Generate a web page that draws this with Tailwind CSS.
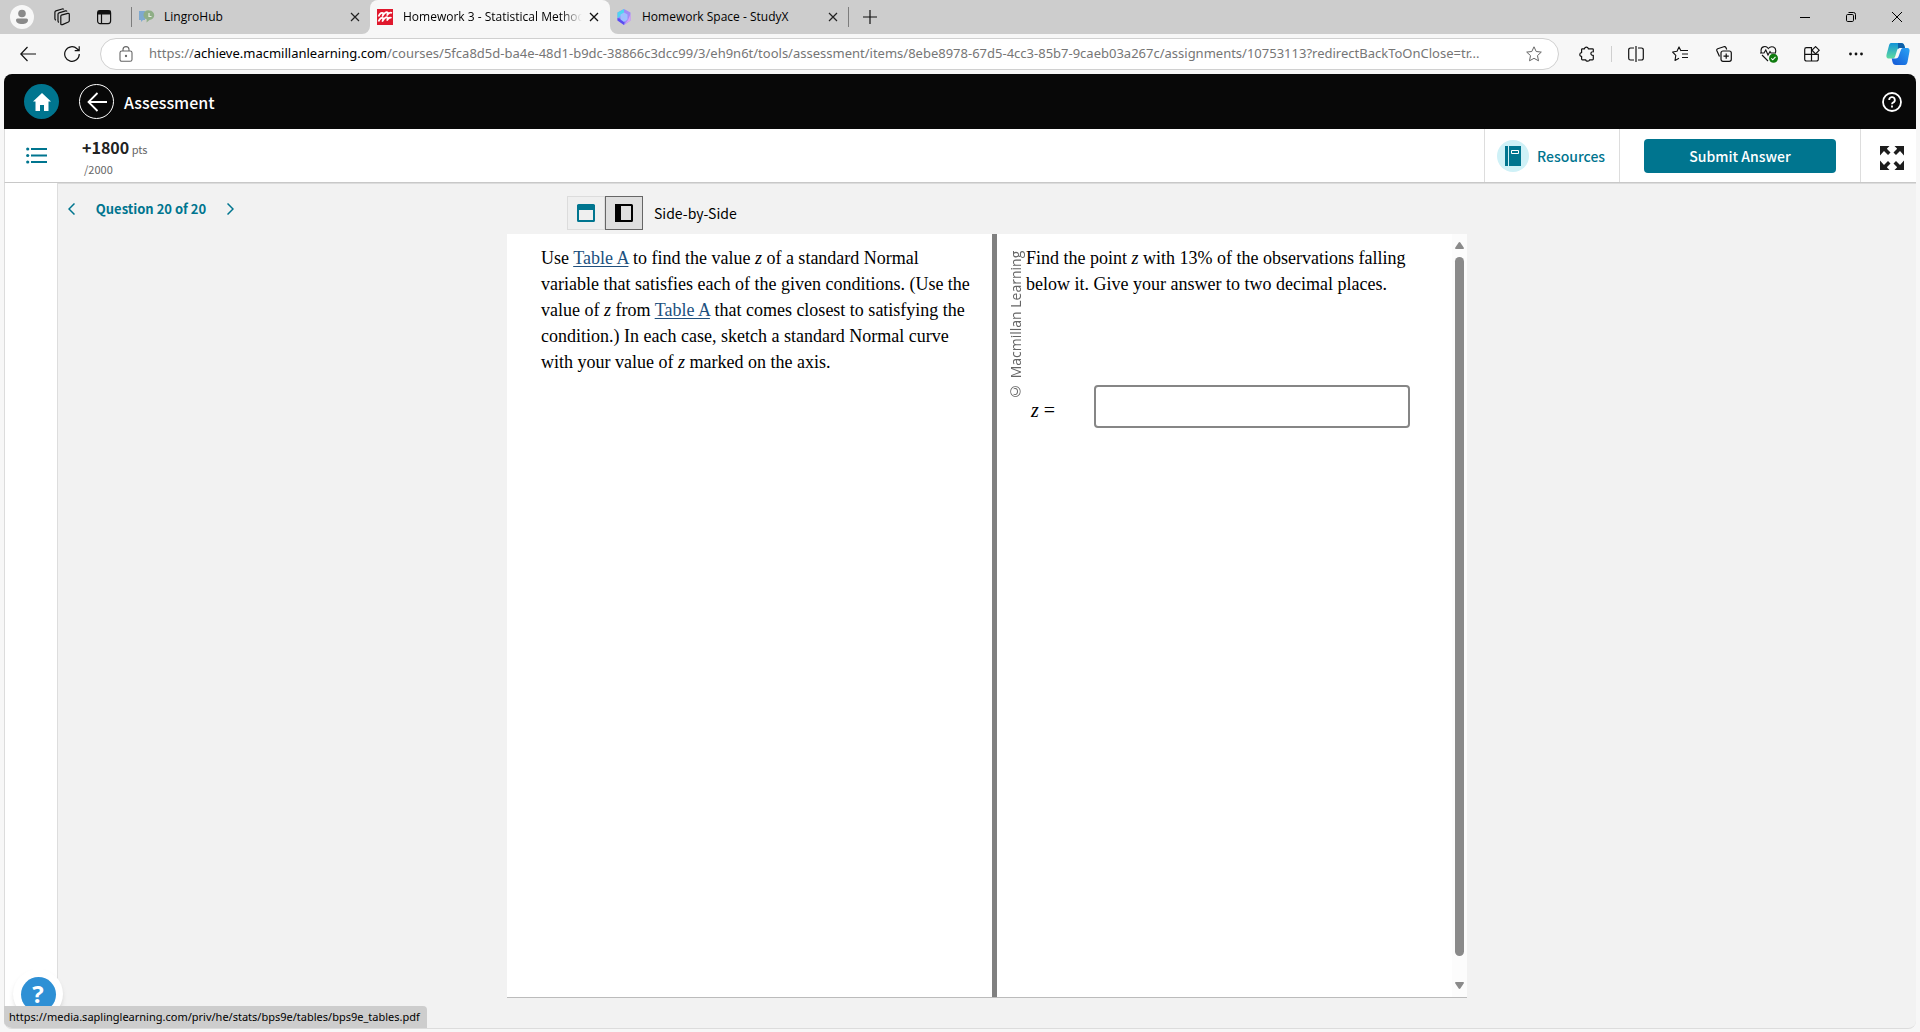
<!DOCTYPE html>
<html lang="en">
<head>
<meta charset="utf-8">
<title>Homework 3 - Statistical Methods</title>
<script src="https://cdn.jsdelivr.net/npm/@tailwindcss/browser@4"></script>
</head>
<body class="flex h-screen flex-col overflow-hidden bg-[#f7f7f7] font-['Open_Sans',sans-serif] text-black">

<!-- Tab strip -->
<div class="flex h-[34px] shrink-0 items-stretch bg-[#cdcdcd] text-xs">
  <div class="flex items-center pl-[10px]">
    <button aria-label="Profile" class="flex size-6 items-center justify-center rounded-full bg-[#f7f7f7]">
      <svg class="size-6" viewBox="0 0 24 24" fill="#8a8a8a"><circle cx="12" cy="8.500" r="3.800"/><path d="M7.500 13.500h9a1.500 1.500 0 0 1 1.500 1.500c0 2.600-2.500 4-6 4s-6-1.400-6-4a1.500 1.500 0 0 1 1.500-1.500z"/></svg>
    </button>
    <button aria-label="Workspaces" class="ml-[19px] size-[18px]">
      <svg class="size-[18px]" viewBox="0 0 18 18" fill="none" stroke="#111" stroke-width="1.200" stroke-linejoin="round"><path d="M8.300 7.200l6.500-1.800c.9-.2 1.500.2 1.500 1v6.200c0 .6-.3 1.100-.9 1.400l-5.900 2.600c-.9.4-1.700 0-1.700-.9V8.400c0-.6 0-1 .5-1.200z"/><path d="M6 14.300c-.8-.2-1-.7-1-1.400V6.200c0-.7.3-1.200 1-1.400l6.500-1.900c.7-.2 1.200 0 1.500.6"/><path d="M3 12.200c-.8-.2-1.100-.7-1.100-1.400V4.200c0-.7.3-1.200 1-1.400L9.200 1c.7-.2 1.200 0 1.500.6"/></svg>
    </button>
    <button aria-label="Tab actions" class="ml-[25px] size-4">
      <svg class="size-4" viewBox="0 0 16 16" fill="none" stroke="#111" stroke-width="1.200"><rect x="1.600" y="1.600" width="13" height="13" rx="2.500"/><path d="M1.600 3.500h13" stroke-width="4"/><path d="M5.500 5v9.500"/></svg>
    </button>
    <span class="ml-[19px] h-5 w-px bg-[#7d7d7d]"></span>
  </div>
  <div class="flex w-[238px] items-center pl-[7px]">
    <svg class="h-4 w-4" viewBox="0 0 16 16"><path d="M0 2h6v9H4l-2 2v-2H0z" fill="#7fa9cf"/><path d="M10.500 1.500a4.500 4.500 0 0 1 0 9.500l-3 2.500.3-3A4.500 4.500 0 0 1 10.500 1.500z" fill="#8fae86"/><path d="M10 4v3.500h2.500" stroke="#e6ece3" fill="none" stroke-width="1.200"/></svg>
    <span class="ml-[9px] flex-1">LingroHub</span>
    <button aria-label="Close tab" class="mr-[9px] size-3"><svg class="size-3" viewBox="0 0 12 12" stroke="#222" stroke-width="1.200"><path d="M2 2l8 8M10 2l-8 8"/></svg></button>
  </div>
  <div class="relative flex w-60 items-center rounded-t-lg bg-[#f7f7f7] pl-[7px]">
    <svg class="absolute bottom-0 -left-2 size-2" viewBox="0 0 8 8" fill="#f7f7f7"><path d="M8 0v8H0a8 8 0 0 0 8-8z"/></svg>
    <svg class="absolute -right-2 bottom-0 size-2" viewBox="0 0 8 8" fill="#f7f7f7"><path d="M0 0v8h8a8 8 0 0 1-8-8z"/></svg>
    <svg class="size-4" viewBox="0 0 16 16"><path d="M0 0h16v16H0z" fill="#e0182d"/><path d="M1.500 7.500C3 4 5 3 6.500 4.500L5.500 7C8 3 9.500 2.500 11 4l-.8 2C11.500 4 13 3 15 4M1.500 12.500C3 9 5 8 6.500 9.500L5.500 12C8 8 9.500 7.500 11 9l-.8 2c1.300-2 2.800-3 4.300-2" stroke="#fff" stroke-width="1.800" fill="none" stroke-linejoin="round"/></svg>
    <span class="ml-[10px] w-[179px] overflow-hidden mask-r-from-88% whitespace-nowrap">Homework 3 - Statistical Methods</span>
    <button aria-label="Close tab" class="ml-[6px] size-3"><svg class="size-3" viewBox="0 0 12 12" stroke="#111" stroke-width="1.300"><path d="M2 2l8 8M10 2l-8 8"/></svg></button>
  </div>
  <div class="flex w-[238px] items-center pl-[7px]">
    <svg class="h-4 w-[14px]" viewBox="0 0 14 16"><path d="M7 0l6.500 3.500v8L7 16 .5 11.500v-8z" fill="#a08cf5"/><path d="M7 0L.5 3.500v6L7 4z" fill="#4fd6ef"/><path d="M.5 9v2.500L7 16l1-5z" fill="#5a4df0"/><path d="M7 3.500l3.500 2v5L7 13l-3.500-2.500v-5z" fill="#9fc0ff"/><path d="M13.500 5v6.500L8 15l3-4z" fill="#d8a2f5"/></svg>
    <span class="ml-[11px] flex-1">Homework Space - StudyX</span>
    <button aria-label="Close tab" class="mr-[9px] size-3"><svg class="size-3" viewBox="0 0 12 12" stroke="#222" stroke-width="1.200"><path d="M2 2l8 8M10 2l-8 8"/></svg></button>
  </div>
  <div class="flex flex-1 items-center">
    <span class="h-5 w-px bg-[#7d7d7d]"></span>
    <button aria-label="New tab" class="ml-[14px] size-[14px]"><svg class="size-[14px]" viewBox="0 0 14 14" stroke="#111" stroke-width="1.200"><path d="M7 0v14M0 7h14"/></svg></button>
  </div>
  <div class="flex">
    <button aria-label="Minimize" class="flex w-[46px] items-center justify-center"><svg class="size-[10px]" viewBox="0 0 10 10" stroke="#000"><path d="M0 5.500h10"/></svg></button>
    <button aria-label="Restore" class="flex w-[46px] items-center justify-center"><svg class="size-[10px]" viewBox="0 0 10 10" stroke="#000" fill="none"><rect x=".5" y="2.500" width="7" height="7" rx="1.200"/><path d="M2.500.5h5a2 2 0 0 1 2 2v5"/></svg></button>
    <button aria-label="Close window" class="flex w-[46px] items-center justify-center"><svg class="size-[10px]" viewBox="0 0 10 10" stroke="#000"><path d="M0 0l10 10M10 0L0 10"/></svg></button>
  </div>
</div>

<!-- Address bar -->
<div class="flex h-10 shrink-0 items-center pr-[10px] pl-5">
  <button aria-label="Back" class="size-4"><svg class="size-4" viewBox="0 0 16 16" fill="none" stroke="#111" stroke-width="1.200"><path d="M16 8H.8M7.500 1L.8 8l6.700 7"/></svg></button>
  <button aria-label="Refresh" class="ml-7 size-4"><svg class="size-4" viewBox="0 0 16 16" fill="none" stroke="#111" stroke-width="1.200"><path d="M15.300 8A7.300 7.300 0 1 1 13 2.700l2 1.800M15.200.2v4.500h-4.500"/></svg></button>
  <div class="ml-5 flex h-8 min-w-0 flex-1 items-center rounded-full border border-[#d0d0d0] bg-white pr-4 pl-[18px]">
    <svg class="h-4 w-[14px] shrink-0" viewBox="0 0 14 16" fill="none" stroke="#666" stroke-width="1.100"><rect x="1" y="5" width="12" height="10.300" rx="1.800"/><path d="M4 5V3.600a3 3 0 0 1 6 0V5"/><circle cx="7" cy="10" r=".6" fill="#666"/></svg>
    <span class="ml-4 min-w-0 flex-1 overflow-hidden font-['Noto_Sans',sans-serif] text-[13px] text-ellipsis whitespace-nowrap text-[#767676]">https://<span class="text-black">achieve.macmillanlearning.com</span>/courses/5fca8d5d-ba4e-48d1-b9dc-38866c3dcc99/3/eh9n6t/tools/assessment/items/8ebe8978-67d5-4cc3-85b7-9caeb03a267c/assignments/10753113?redirectBackToOnClose=tr...</span>
    <button aria-label="Favorite" class="ml-4 size-4 shrink-0"><svg class="size-4" viewBox="0 0 16 16" fill="none" stroke="#666" stroke-linejoin="round"><path d="M8 .8l2.200 4.700 5.100.6-3.800 3.500 1 5.200L8 12.300l-4.500 2.500 1-5.200L.7 6.100l5.100-.6z"/></svg></button>
  </div>
  <div class="ml-5 flex shrink-0 items-center">
    <button aria-label="Extensions" class="size-4"><svg class="size-4" viewBox="0 0 16 16" fill="none" stroke="#111" stroke-width="1.200" stroke-linejoin="round"><path d="M5.500 2.500a2 2 0 0 1 3.800 0v.3h4.200c.5 0 .8.300.8.800v2.200c-3.200-.6-3.200 4 0 3.600v3.700c0 .5-.3.800-.8.800h-3c.2 1.500-3.600 2-3.700 0H3.400c-.5 0-.8-.3-.8-.8V10.300c-2.400.2-2.400-3.600 0-3.700V3.600c0-.5.300-.8.800-.8h2.100z"/></svg></button>
    <span class="mx-4 h-4 w-px bg-[#cfcfcf]"></span>
    <button aria-label="Split screen" class="size-4"><svg class="size-4" viewBox="0 0 16 16" fill="none" stroke="#111" stroke-width="1.200"><path d="M6 2H2.500A1.800 1.800 0 0 0 .7 3.800v8.400A1.800 1.800 0 0 0 2.500 14H6M10 2h3.500a1.800 1.800 0 0 1 1.800 1.800v8.400a1.800 1.800 0 0 1-1.800 1.800H10M8 0v16"/></svg></button>
    <button aria-label="Favorites" class="ml-7 size-4"><svg class="size-4" viewBox="0 0 16 16" fill="none" stroke="#111" stroke-width="1.100" stroke-linejoin="round"><path d="M9 5L7 .9 5 5.300.6 6l3.200 3.300-.8 5.200 4-2.200M9 4.500h7M10 8h6M10 11.500h6"/></svg></button>
    <button aria-label="Collections" class="ml-7 size-4"><svg class="size-4" viewBox="0 0 16 16" fill="none" stroke="#111" stroke-width="1.200"><rect x="5" y="5" width="10.300" height="10.300" rx="2"/><path d="M10.200 7.500v5.300M7.500 10.200h5.300M3.500 10.500L.9 4.800c-.4-1 0-1.800.8-2.100L7.800.7c1-.3 1.800 0 2.200 1L10.700 3.500"/></svg></button>
    <button aria-label="Browser essentials" class="ml-7 h-[18px] w-[18px]"><svg class="size-[18px]" viewBox="0 0 18 18" fill="none" stroke="#111" stroke-width="1.100"><path d="M1.300 7.500C-.2 1 6 .3 8.300 3.500 11 .3 17 1.500 15.500 7.500M0 8h4l1.800-3L8 10l2-3.500 1 1.500h5M2 10l6 6"/><circle cx="13.500" cy="13.200" r="4.500" fill="#107c10" stroke="none"/><path d="M11.300 13.300l1.500 1.500 2.700-3" stroke="#fff"/></svg></button>
    <button aria-label="Apps" class="ml-[26px] size-4"><svg class="size-4" viewBox="0 0 16 16" fill="none" stroke="#111" stroke-width="1.200"><path d="M8 1.600H2.500A1.800 1.800 0 0 0 .7 3.400v9.800A1.800 1.800 0 0 0 2.500 15h10a1.800 1.800 0 0 0 1.800-1.800V8.300H.7M7.500 1.600V15"/><path d="M11.600.6l3.600 3.600-3.600 3.600L8 4.200z" fill="#f7f7f7"/></svg></button>
    <button aria-label="Settings and more" class="ml-7 size-4"><svg class="size-4" viewBox="0 0 16 16" fill="#111"><circle cx="2.500" cy="8" r="1.400"/><circle cx="8" cy="8" r="1.400"/><circle cx="13.500" cy="8" r="1.400"/></svg></button>
    <button aria-label="Copilot" class="ml-[22px] size-6"><svg class="size-6" viewBox="0 0 24 24"><defs><linearGradient id="a" x1="0" y1="0" x2="0" y2="1"><stop stop-color="#1293d8"/><stop offset="1" stop-color="#5fdb9f"/></linearGradient><linearGradient id="b" x1="0" y1="1" x2="1" y2="0"><stop stop-color="#1558d6"/><stop offset="1" stop-color="#28a3f5"/></linearGradient></defs><path d="M5 1h10c2 0 3 1 3.500 3l.5 2h-5c-2 0-2.500 1-3 2.500L9.300 14c-.6 2-1.500 2.500-3.300 2.500H3c-2.500 0-3-2-2.300-4.500L3 3.500C3.400 2 4 1 5 1z" fill="url(#a)"/><path d="M12 1h3c2 0 3 1 3.500 3l.5 2h-5c-1 0-1.500.300-2 1z" fill="#0d5fa8"/><path d="M19 23H10c-2 0-3-1-3.500-3l-.8-3.500h4c2 0 2.500-1 3-2.500L14.700 8.500C15.300 6.500 16 6 18 6h3c2.500 0 3 2 2.300 4.500L21.500 20c-.4 2-1.500 3-2.500 3z" fill="url(#b)"/></svg></button>
  </div>
</div>

<!-- Page -->
<div class="relative mx-1 mb-[3px] flex min-h-0 flex-1 flex-col overflow-hidden rounded-lg border-b border-[#dcdcdc] bg-[#f2f2f2] font-['Noto_Sans_CJK_SC',sans-serif]">
  <header class="flex h-[55px] shrink-0 items-center bg-[#080808] pr-[14px] pl-5 text-white">
    <a href="#" aria-label="Home" class="flex size-[35px] items-center justify-center rounded-full bg-[#00758f]"><svg class="size-[18px]" viewBox="0 0 18 18" fill="#fff"><path d="M9 0l9 8.500h-2.500V18H11v-6H7v6H2.500V8.500H0z"/></svg></a>
    <a href="#" aria-label="Back" class="ml-5 flex size-[35px] items-center justify-center rounded-full border border-white"><svg class="size-5" viewBox="0 0 20 20" fill="none" stroke="#fff" stroke-width="1.800"><path d="M20 10H1.500M10.500 1l-9 9 9 9"/></svg></a>
    <h1 class="ml-[10px] flex-1 text-base leading-6 font-medium">Assessment</h1>
    <button aria-label="Help" class="size-5"><svg class="size-5" viewBox="0 0 20 20" fill="none" stroke="#fff" stroke-width="1.800"><circle cx="10" cy="10" r="9"/><path d="M7.200 8a2.800 2.800 0 1 1 3.800 2.600c-.7.300-1 .7-1 1.700"/><path d="M10 13.500v2"/></svg></button>
  </header>

  <div class="flex h-[54px] shrink-0 items-stretch border-b border-l border-b-[#c8c8c8] border-l-[#dcdcdc] bg-white">
    <button aria-label="Menu" class="flex w-[63px] items-center pl-[21px]"><svg class="h-[17px] w-[21px]" viewBox="0 0 21 17" stroke="#00758f" fill="#00758f" stroke-width="2"><path d="M5 2h16M5 8.500h16M5 15h16"/><g stroke="none"><circle cx="1.700" cy="2" r="1.600"/><circle cx="1.700" cy="8.500" r="1.600"/><circle cx="1.700" cy="15" r="1.600"/></g></svg></button>
    <div class="flex flex-1 flex-col pt-2 pl-[14px] text-[11px] leading-[20px] text-[#666]">
      <div><b class="text-base leading-[20px] font-bold text-[#222]">+1800</b> pts</div>
      <div class="pl-[2px]">/2000</div>
    </div>
    <a href="#" class="flex w-[136px] items-center gap-2 border-x border-[#ddd] pl-3 text-sm font-medium text-[#00758f]">
      <span class="flex size-8 items-center justify-center rounded-full bg-[#cff1f7]"><svg class="h-5 w-4" viewBox="0 0 16 20"><path d="M0 0h3v20H0zM4 0h12v20H4z" fill="#00758f"/><path d="M6.500 4.500h7v3h-7z" fill="none" stroke="#fff"/></svg></span>
      Resources
    </a>
    <div class="flex w-[241px] items-start justify-center border-r border-[#ddd] pt-[10px]">
      <button class="h-[34px] w-48 rounded bg-[#00758f] text-sm font-medium text-white">Submit Answer</button>
    </div>
    <button aria-label="Full screen" class="flex w-[55px] items-center justify-end pt-1 pr-3"><svg class="size-6" viewBox="0 0 24 24" fill="#1d1d1d"><path d="M0 0h9.500L6.800 2.700l3.700 3.700L8 9 4 5 0 9.500z"/><path d="M24 0h-9.500l2.700 2.700-3.700 3.700L16 9l4-4 4 4.500zM0 24h9.500l-2.700-2.700 3.700-3.700L8 15l-4 4-4-4.500zM24 24h-9.500l2.700-2.700-3.700-3.700L16 15l4 4 4-4.500z"/></svg></button>
  </div>

  <div class="flex min-h-0 flex-1 border-l border-[#dcdcdc]">
    <aside class="w-[53px] shrink-0 border-r border-[#ddd] bg-white"></aside>
    <main class="grid min-w-0 flex-1 grid-cols-[1fr_960px_1fr] grid-rows-[50px_1fr] border-t border-[#dcdcdc] pb-[30px]">
      <nav class="flex items-start pt-[14px] pl-[10px] text-[13px] leading-[22px] font-bold text-[#00758f]">
        <button aria-label="Previous question" class="flex h-[22px] items-center"><svg class="h-3 w-[7px]" viewBox="0 0 7 12" fill="none" stroke="#00758f" stroke-width="1.500"><path d="M6.500.5L1 6l5.500 5.500"/></svg></button>
        <span class="w-[152px] text-center whitespace-nowrap">Question 20 of 20</span>
        <button aria-label="Next question" class="flex h-[22px] items-center"><svg class="h-3 w-[7px]" viewBox="0 0 7 12" fill="none" stroke="#00758f" stroke-width="1.500"><path d="M.5.5L6 6 .5 11.500"/></svg></button>
      </nav>
      <div class="flex items-center pt-3 pb-1 pl-[60px] text-sm">
        <button aria-label="Stacked" class="flex h-[34px] w-[38px] items-center justify-center border border-[#dcdcdc] bg-[#efefef]"><svg class="size-[18px]" viewBox="0 0 18 18" fill="none" stroke="#00758f" stroke-width="2"><rect x="1" y="1" width="16" height="16" rx=".5"/><path d="M0 3.500h18" stroke-width="5"/></svg></button>
        <button aria-label="Side-by-side" class="flex h-[34px] w-[38px] items-center justify-center border border-[#666] bg-[#dedede]"><svg class="size-[18px]" viewBox="0 0 18 18" fill="none" stroke="#000" stroke-width="2"><rect x="1" y="1" width="16" height="16" rx=".5"/><path d="M3 0v18" stroke-width="6"/></svg></button>
        <span class="ml-[11px]">Side-by-Side</span>
      </div>
      <div></div>
      <div></div>
      <div class="flex border-b border-[#bbb] bg-white font-['Liberation_Serif',serif] text-lg leading-[26px]">
        <section class="w-[485px] pt-[11px] pr-5 pl-[34px]">
          <p>Use <a href="#" class="text-[#20507e] underline underline-offset-2">Table A</a> to find the value <i>z</i> of a standard Normal variable that satisfies each of the given conditions. (Use the value of <i>z</i> from <a href="#" class="text-[#20507e] underline underline-offset-2">Table A</a> that comes closest to satisfying the condition.) In each case, sketch a standard Normal curve with your value of <i>z</i> marked on the axis.</p>
        </section>
        <div class="w-[5px] bg-[#808080]"></div>
        <section class="flex flex-1 pt-[11px]">
          <div class="mt-[7px] ml-[11px] h-[149px] w-[18px] rotate-180 font-['Open_Sans',sans-serif] text-sm leading-[16px] whitespace-nowrap text-[#666] [writing-mode:vertical-rl]">© Macmillan Learning</div>
          <div class="flex-1">
            <p class="pr-10">Find the point <i>z</i> with 13% of the observations falling below it. Give your answer to two decimal places.</p>
            <div class="mt-[88px] flex items-center pl-[5px]">
              <label for="z" class="w-[63px] pt-[6px] text-xl"><i>z</i> =</label>
              <input id="z" type="text" class="h-[43px] w-[316px] rounded border-2 border-[#868686] bg-white px-2">
            </div>
          </div>
        </section>
        <div class="flex w-[15px] flex-col items-center bg-[#fcfcfc] py-2">
          <svg class="h-[7px] w-[9px]" viewBox="0 0 9 7" fill="#8a8a8a"><path d="M3.500.7q1-1.200 2 0L9 6q0 1-1 1H1Q0 7 0 6z"/></svg>
          <div class="mt-2 mb-[26px] w-[9px] flex-1 rounded-full bg-[#8a8a8a]"></div>
          <svg class="h-[7px] w-[9px]" viewBox="0 0 9 7" fill="#8a8a8a"><path d="M3.500 6.300q1 1.200 2 0L9 1q0-1-1-1H1Q0 0 0 1z"/></svg>
        </div>
      </div>
      <div></div>
    </main>
  </div>

  <!-- Chat launcher and link status, floating over the page -->
  <button aria-label="Support chat" class="absolute bottom-[9px] left-[9px] flex size-[50px] items-center justify-center rounded-full bg-white font-['Open_Sans',sans-serif] shadow-md"><span class="flex size-[35px] items-center justify-center rounded-full bg-[#2e90d5] text-2xl font-bold text-white">?</span></button>
  <div class="absolute bottom-0 left-0 h-[22px] rounded-tr bg-[#cdcdcd] pr-[7px] pl-[5px] font-['Noto_Sans',sans-serif] text-[11px] leading-[22px]">https://media.saplinglearning.com/priv/he/stats/bps9e/tables/bps9e_tables.pdf</div>
</div>
</body>
</html>
